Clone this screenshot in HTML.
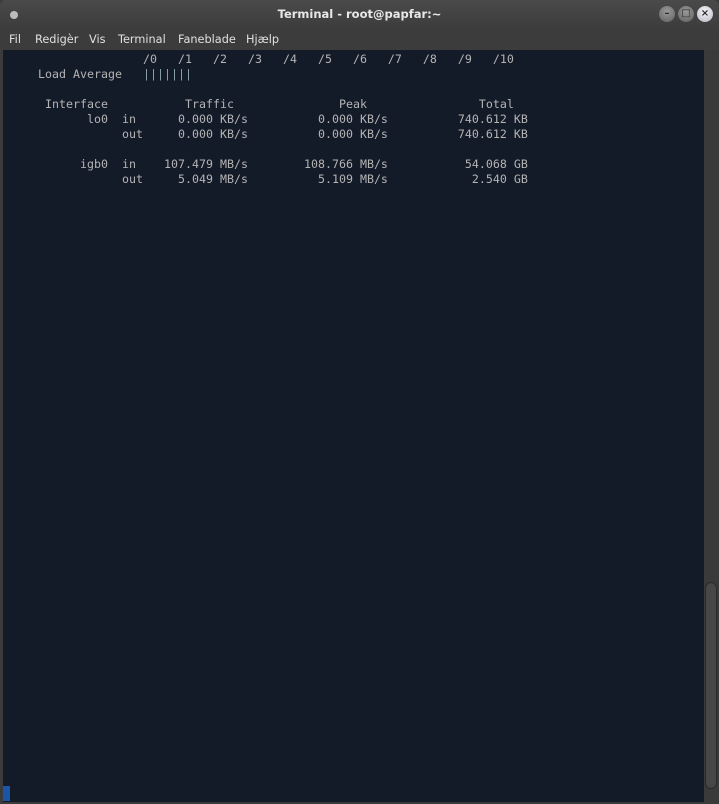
<!DOCTYPE html>
<html><head><meta charset="utf-8"><style>
*{margin:0;padding:0;box-sizing:border-box}
body{width:719px;height:804px;background:#3b3b3b;overflow:hidden;position:relative;font-family:"DejaVu Sans","Liberation Sans",sans-serif}
.title{position:absolute;left:0;top:0;width:719px;height:29px;background:linear-gradient(#4a4a4a,#3c3c3c);border-radius:6px 6px 0 0;color:#e8e8e8;font-weight:bold;font-size:11.5px;text-align:center;line-height:29px}
.dot{position:absolute;left:10px;top:11px;width:8px;height:8px;border-radius:50%;background:#bbb}
.btn{position:absolute;top:6px;width:16px;height:16px;border-radius:50%;background:radial-gradient(circle at 50% 35%,#9a9a9a,#5f5f5f);color:#2a2a2a;font-size:10px;line-height:16px;text-align:center;font-weight:bold}
.menu{position:absolute;left:0;top:29px;width:719px;height:21px;background:#3c3c3c;color:#e0e0e0;font-size:11.3px;line-height:21px}
.menu span{position:absolute;top:0}
.term{position:absolute;left:3px;top:50px;width:701px;height:752px;background:#131a28}
pre{position:absolute;left:0;top:2px;font-family:"DejaVu Sans Mono",monospace;font-size:11.63px;line-height:15px;color:#b4b4b4;white-space:pre}
.bar{color:#8aa2aa}
.sb{position:absolute;left:704px;top:50px;width:15px;height:752px;background:#3a3a3a}
.thumb{position:absolute;left:705px;top:582px;width:12px;height:207px;border:1px solid #2a2a2a;border-radius:6px;background:#474747}
.cur{position:absolute;left:3px;top:786px;width:7px;height:15px;background:#1b55a8}
</style></head><body>
<div class="title"><div class="dot"></div>Terminal - root@papfar:~
<div class="btn" style="left:659px">–</div><div class="btn" style="left:678px">□</div><div class="btn" style="left:697px;background:radial-gradient(circle at 50% 35%,#f4f4f8,#b8b8c4)">×</div></div>
<div class="menu"><span style="left:9px">Fil</span><span style="left:35px">Redigèr</span><span style="left:89px">Vis</span><span style="left:118px">Terminal</span><span style="left:178px">Faneblade</span><span style="left:246px">Hjælp</span></div>
<div class="term"><pre>                    /0   /1   /2   /3   /4   /5   /6   /7   /8   /9   /10
     Load Average   <span class="bar">|||||||</span>

      Interface           Traffic               Peak                Total
            lo0  in      0.000 KB/s          0.000 KB/s          740.612 KB
                 out     0.000 KB/s          0.000 KB/s          740.612 KB

           igb0  in    107.479 MB/s        108.766 MB/s           54.068 GB
                 out     5.049 MB/s          5.109 MB/s            2.540 GB</pre></div>
<div class="sb"></div><div class="thumb"></div>
<div class="cur"></div>
</body></html>
